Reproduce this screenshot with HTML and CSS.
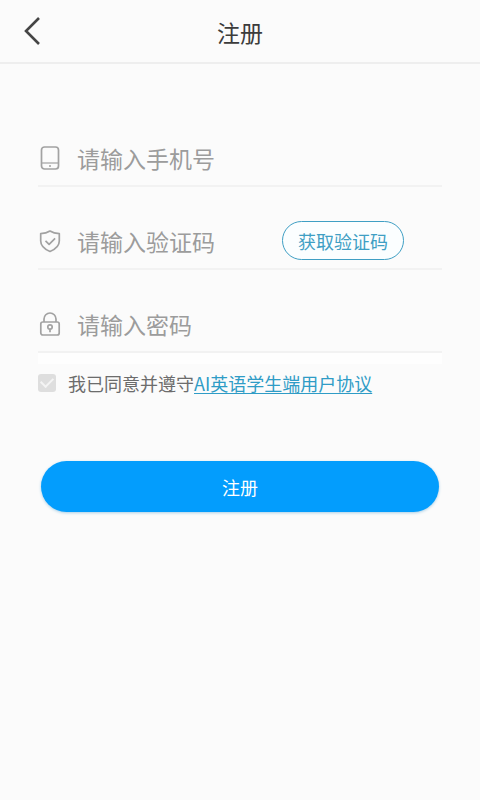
FILE: index.html
```html
<!DOCTYPE html>
<html lang="zh-CN">
<head>
<meta charset="utf-8">
<meta name="viewport" content="width=device-width, initial-scale=1">
<title>注册</title>
<link rel="stylesheet" href="styles.css">
</head>
<body>
<header class="header">
  <button class="back" type="button" aria-label="返回">
    <svg width="18" height="30" viewBox="0 0 18 30" fill="none" stroke="#454545" stroke-width="2.6"><path d="M16 2 3 15l13 13"/></svg>
  </button>
  <h1 class="title">注册</h1>
</header>
<main>
  <form class="form">
    <div class="field">
      <label class="icon" for="phone" aria-label="手机号">
        <svg width="24" height="26" viewBox="0 0 24 26" fill="none" stroke="#a2a2a2" stroke-width="1.7"><rect x="3.5" y="2" width="17" height="22" rx="3"/><path d="M4 18h16" stroke-width="1.2"/><circle cx="12" cy="21" r="1" fill="#a2a2a2" stroke="none"/></svg>
      </label>
      <input class="input" id="phone" type="tel" placeholder="请输入手机号">
    </div>
    <div class="field">
      <label class="icon" for="code" aria-label="验证码">
        <svg width="24" height="26" viewBox="0 0 24 26" fill="none" stroke="#a2a2a2" stroke-width="1.7" stroke-linejoin="round"><path d="M12 3c-2.800 1.800-5.800 2.500-9.300 2.600V13c0 5 3.800 8.200 9.300 10.500 5.500-2.300 9.300-5.500 9.300-10.500V5.600C17.800 5.500 14.800 4.800 12 3Z"/><path d="m7.500 12.800 3.600 3.600 6-6"/></svg>
      </label>
      <input class="input" id="code" type="text" placeholder="请输入验证码">
      <button class="send" type="button">获取验证码</button>
    </div>
    <div class="field field-last">
      <label class="icon" for="password" aria-label="密码">
        <svg width="24" height="26" viewBox="0 0 24 26" fill="none" stroke="#a2a2a2" stroke-width="1.7"><rect x="2.800" y="11" width="18.400" height="13" rx="2"/><path d="M6 11V8a6 6 0 0 1 12 0v3"/><circle cx="12" cy="16" r="2.200"/><path d="M12 18.200v3"/></svg>
      </label>
      <input class="input" id="password" type="password" placeholder="请输入密码">
    </div>
    <div class="agreement">
      <input class="check" id="agree" type="checkbox" checked>
      <label for="agree">我已同意并遵守</label><a class="link" href="#agreement">AI英语学生端用户协议</a>
    </div>
    <button class="submit" type="submit">注册</button>
  </form>
</main>
</body>
</html>
```
FILE: styles.css
```css
* {
  box-sizing: border-box;
}

body {
  margin: 0;
  min-height: 100vh;
  background: #fbfbfb;
  color: #3c3c3c;
  font-family: "Noto Sans CJK SC", sans-serif;
}

button,
input {
  font-family: inherit;
}

.header {
  display: grid;
  grid-template-columns: 64px 1fr 64px;
  align-items: center;
  height: 64px;
  border-bottom: 2px solid #eeeeee;
}

.back {
  display: flex;
  width: 64px;
  padding: 0 0 0 23px;
  border: 0;
  background: none;
}

.title {
  margin: 0;
  padding-top: 2px;
  font-size: 23px;
  font-weight: 400;
  line-height: 32px;
  text-align: center;
}

.form {
  display: flex;
  flex-direction: column;
  padding: 40px 38px 0;
}

.field {
  display: flex;
  align-items: center;
  height: 54px;
  margin-top: 29px;
  padding-bottom: 3px;
  border-bottom: 2px solid #f2f2f2;
}

.field-last {
  box-shadow: 0 11px 0 #fefefe;
}

.icon {
  display: flex;
  margin-right: 15px;
}

.input {
  flex: 1;
  min-width: 0;
  height: 40px;
  padding: 0;
  border: 0;
  outline: 0;
  background: none;
  color: #3c3c3c;
  font-size: 23px;
}

.input::placeholder {
  color: #9c9c9c;
  opacity: 1;
}

.send {
  height: 39px;
  margin-right: 38px;
  padding: 0 15px;
  border: 1px solid #3f9fc4;
  border-radius: 20px;
  background: #fbfeff;
  color: #3f9fc4;
  font-size: 18px;
  line-height: 24px;
}

.agreement {
  display: flex;
  align-items: center;
  margin-top: 17px;
  color: #6c6c6c;
  font-size: 18px;
  line-height: 26px;
  white-space: nowrap;
}

.check {
  appearance: none;
  display: grid;
  place-items: center;
  width: 18px;
  height: 18px;
  margin: 0 12px 0 0;
  padding-bottom: 4px;
  border-radius: 3px;
  background: #dedede;
}

.check:checked::before {
  content: "";
  width: 10px;
  height: 6px;
  border-bottom: 2px solid #f4f4f4;
  border-left: 2px solid #f4f4f4;
  transform: rotate(-45deg);
}

.link {
  color: #2f9cc6;
  text-decoration: underline;
  text-decoration-thickness: 1px;
  text-underline-offset: 2px;
}

.submit {
  height: 51px;
  margin: 65px 3px 0;
  border: 0;
  border-radius: 26px;
  background: #039dfd;
  box-shadow: 0 1px 3px #a9cfe6;
  color: #ffffff;
  font-size: 18px;
}
```
